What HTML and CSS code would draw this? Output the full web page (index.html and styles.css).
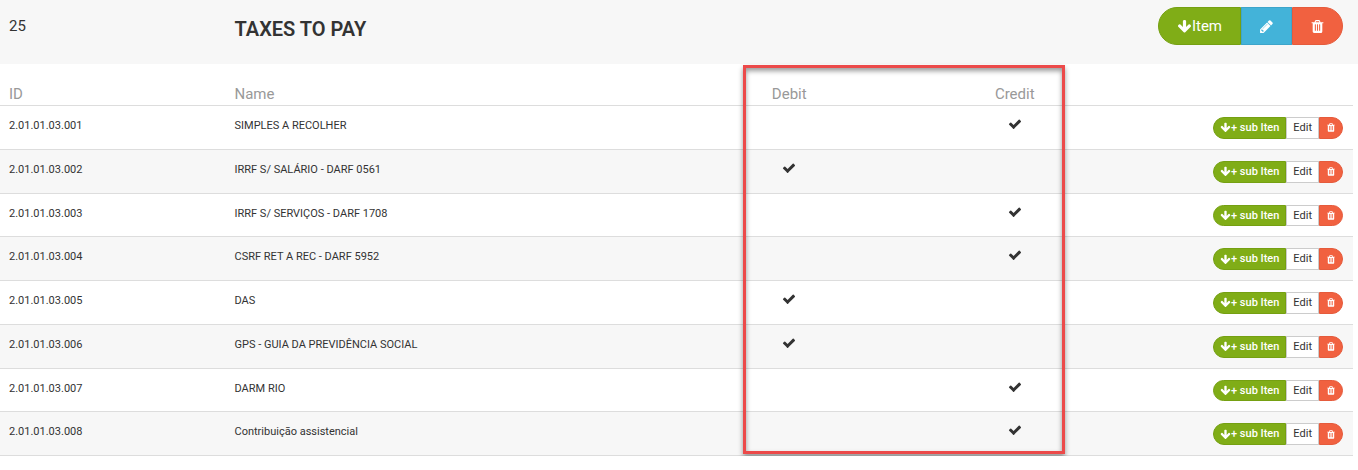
FILE: index.html
```
<!DOCTYPE html>
<html lang="en">
<head>
  <meta charset="UTF-8">
  <title>Taxes to pay</title>
  <link rel="stylesheet" href="styles.css">
</head>
<body>

  <!-- Icon set -->
  <svg class="icon-set" aria-hidden="true">
    <symbol id="check" viewBox="0 0 1792 1792"><path d="M1671 566q0 40-28 68l-724 724-136 136q-28 28-68 28t-68-28l-136-136-362-362q-28-28-28-68t28-68l136-136q28-28 68-28t68 28l294 295 656-657q28-28 68-28t68 28l136 136q28 28 28 68z"/></symbol>
    <symbol id="trash" viewBox="0 0 1792 1792"><path d="M704 1376v-704q0-14-9-23t-23-9h-64q-14 0-23 9t-9 23v704q0 14 9 23t23 9h64q14 0 23-9t9-23zm256 0v-704q0-14-9-23t-23-9h-64q-14 0-23 9t-9 23v704q0 14 9 23t23 9h64q14 0 23-9t9-23zm256 0v-704q0-14-9-23t-23-9h-64q-14 0-23 9t-9 23v704q0 14 9 23t23 9h64q14 0 23-9t9-23zm-544-992h448l-48-117q-7-9-17-11h-317q-10 2-17 11zm928 32v64q0 14-9 23t-23 9h-96v948q0 83-47 143.500t-113 60.500h-832q-66 0-113-58.500t-47-141.500v-952h-96q-14 0-23-9t-9-23v-64q0-14 9-23t23-9h309l70-167q15-37 54-63t79-26h320q40 0 79 26t54 63l70 167h309q14 0 23 9t9 23z"/></symbol>
    <symbol id="pencil" viewBox="0 0 1792 1792"><path d="M491 1536l91-91-235-235-91 91v107h128v128h107zm523-928q0-22-22-22-10 0-17 7l-542 542q-7 7-7 17 0 22 22 22 10 0 17-7l542-542q7-7 7-17zm-54-192l416 416-832 832h-416v-416zm683 96q0 53-37 90l-166 166-416-416 166-165q36-38 90-38 53 0 91 38l235 234q37 39 37 91z"/></symbol>
    <symbol id="arrow-down" viewBox="0 0 1792 1792"><path d="M1675 832q0 53-37 90l-651 652q-39 37-91 37-53 0-90-37l-651-652q-38-36-38-90 0-53 38-91l74-75q39-37 91-37 53 0 90 37l294 294v-704q0-52 38-90t90-38h128q52 0 90 38t38 90v704l294-294q37-37 90-37 52 0 91 37l75 75q37 39 37 91z"/></symbol>
  </svg>

  <!-- Group header -->
  <header class="group-header">
    <span class="group-id">25</span>
    <h1 class="group-name">TAXES TO PAY</h1>
    <div class="btn-group">
      <button class="btn btn-add" type="button"><svg class="icon"><use href="#arrow-down"/></svg>Item</button>
      <button class="btn btn-info" type="button" aria-label="Edit"><svg class="icon"><use href="#pencil"/></svg></button>
      <button class="btn btn-delete" type="button" aria-label="Delete"><svg class="icon"><use href="#trash"/></svg></button>
    </div>
  </header>

  <!-- Accounts -->
  <main class="accounts">
    <table class="accounts-table">
      <colgroup>
        <col class="col-id"><col class="col-name"><col class="col-flag"><col class="col-flag"><col class="col-actions">
      </colgroup>
      <thead>
        <tr>
          <th>ID</th>
          <th>Name</th>
          <th class="flag">Debit</th>
          <th class="flag">Credit</th>
          <td></td>
        </tr>
      </thead>
      <tbody>
        <tr>
          <td>2.01.01.03.001</td>
          <td>SIMPLES A RECOLHER</td>
          <td class="flag"></td>
          <td class="flag"><svg class="icon"><use href="#check"/></svg></td>
          <td>
            <div class="btn-group btn-group-sm">
              <button class="btn btn-add" type="button"><svg class="icon"><use href="#arrow-down"/></svg>+ sub Iten</button>
              <button class="btn btn-edit" type="button">Edit</button>
              <button class="btn btn-delete" type="button" aria-label="Delete"><svg class="icon"><use href="#trash"/></svg></button>
            </div>
          </td>
        </tr>
        <tr>
          <td>2.01.01.03.002</td>
          <td>IRRF S/ SALÁRIO - DARF 0561</td>
          <td class="flag"><svg class="icon"><use href="#check"/></svg></td>
          <td class="flag"></td>
          <td>
            <div class="btn-group btn-group-sm">
              <button class="btn btn-add" type="button"><svg class="icon"><use href="#arrow-down"/></svg>+ sub Iten</button>
              <button class="btn btn-edit" type="button">Edit</button>
              <button class="btn btn-delete" type="button" aria-label="Delete"><svg class="icon"><use href="#trash"/></svg></button>
            </div>
          </td>
        </tr>
        <tr>
          <td>2.01.01.03.003</td>
          <td>IRRF S/ SERVIÇOS - DARF 1708</td>
          <td class="flag"></td>
          <td class="flag"><svg class="icon"><use href="#check"/></svg></td>
          <td>
            <div class="btn-group btn-group-sm">
              <button class="btn btn-add" type="button"><svg class="icon"><use href="#arrow-down"/></svg>+ sub Iten</button>
              <button class="btn btn-edit" type="button">Edit</button>
              <button class="btn btn-delete" type="button" aria-label="Delete"><svg class="icon"><use href="#trash"/></svg></button>
            </div>
          </td>
        </tr>
        <tr>
          <td>2.01.01.03.004</td>
          <td>CSRF RET A REC - DARF 5952</td>
          <td class="flag"></td>
          <td class="flag"><svg class="icon"><use href="#check"/></svg></td>
          <td>
            <div class="btn-group btn-group-sm">
              <button class="btn btn-add" type="button"><svg class="icon"><use href="#arrow-down"/></svg>+ sub Iten</button>
              <button class="btn btn-edit" type="button">Edit</button>
              <button class="btn btn-delete" type="button" aria-label="Delete"><svg class="icon"><use href="#trash"/></svg></button>
            </div>
          </td>
        </tr>
        <tr>
          <td>2.01.01.03.005</td>
          <td>DAS</td>
          <td class="flag"><svg class="icon"><use href="#check"/></svg></td>
          <td class="flag"></td>
          <td>
            <div class="btn-group btn-group-sm">
              <button class="btn btn-add" type="button"><svg class="icon"><use href="#arrow-down"/></svg>+ sub Iten</button>
              <button class="btn btn-edit" type="button">Edit</button>
              <button class="btn btn-delete" type="button" aria-label="Delete"><svg class="icon"><use href="#trash"/></svg></button>
            </div>
          </td>
        </tr>
        <tr>
          <td>2.01.01.03.006</td>
          <td>GPS - GUIA DA PREVIDÊNCIA SOCIAL</td>
          <td class="flag"><svg class="icon"><use href="#check"/></svg></td>
          <td class="flag"></td>
          <td>
            <div class="btn-group btn-group-sm">
              <button class="btn btn-add" type="button"><svg class="icon"><use href="#arrow-down"/></svg>+ sub Iten</button>
              <button class="btn btn-edit" type="button">Edit</button>
              <button class="btn btn-delete" type="button" aria-label="Delete"><svg class="icon"><use href="#trash"/></svg></button>
            </div>
          </td>
        </tr>
        <tr>
          <td>2.01.01.03.007</td>
          <td>DARM RIO</td>
          <td class="flag"></td>
          <td class="flag"><svg class="icon"><use href="#check"/></svg></td>
          <td>
            <div class="btn-group btn-group-sm">
              <button class="btn btn-add" type="button"><svg class="icon"><use href="#arrow-down"/></svg>+ sub Iten</button>
              <button class="btn btn-edit" type="button">Edit</button>
              <button class="btn btn-delete" type="button" aria-label="Delete"><svg class="icon"><use href="#trash"/></svg></button>
            </div>
          </td>
        </tr>
        <tr>
          <td>2.01.01.03.008</td>
          <td>Contribuição assistencial</td>
          <td class="flag"></td>
          <td class="flag"><svg class="icon"><use href="#check"/></svg></td>
          <td>
            <div class="btn-group btn-group-sm">
              <button class="btn btn-add" type="button"><svg class="icon"><use href="#arrow-down"/></svg>+ sub Iten</button>
              <button class="btn btn-edit" type="button">Edit</button>
              <button class="btn btn-delete" type="button" aria-label="Delete"><svg class="icon"><use href="#trash"/></svg></button>
            </div>
          </td>
        </tr>
      </tbody>
    </table>

    <!-- Frame over the debit and credit columns -->
    <div class="highlight"></div>
  </main>

</body>
</html>
```
FILE: styles.css
```
/* RESET & BASE */
* {
  margin: 0;
  padding: 0;
  box-sizing: border-box;
}
body {
  background: #fff;
  color: #333;
  font-family: Roboto, sans-serif;
  font-size: 11px;
  line-height: 18px;
}
.icon-set {
  display: none;
}
.icon {
  width: 14px;
  height: 14px;
  fill: currentColor;
}

/* GROUP HEADER */
.group-header {
  display: grid;
  grid-template-columns: 1fr 3fr 2fr;
  align-items: start;
  margin-right: 5px;
  padding: 7px 0 13px;
  background: #f7f7f7;
  box-shadow: 5px 0 #f7f7f7;
}
.group-id {
  padding: 8px 9px;
  font-size: 15px;
  line-height: 22px;
}
.group-name {
  padding: 8px 9px;
  font-size: 20px;
  font-weight: 600;
  line-height: 28px;
}
.group-header .btn-group {
  margin-right: 10px;
}

/* BUTTONS */
.btn-group {
  display: flex;
  justify-content: flex-end;
}
.btn {
  display: flex;
  align-items: center;
  justify-content: center;
  padding: 8px 17px;
  border: 1px solid;
  color: #fff;
  font: 15px/20px Roboto, sans-serif;
  cursor: pointer;
}
.btn .icon {
  width: 15px;
  height: 15px;
}
.btn:first-child {
  border-radius: 20px 0 0 20px;
}
.btn:last-child {
  border-radius: 0 20px 20px 0;
}
.btn-add {
  padding: 8px 18px;
  background: #80ad17;
  border-color: #75a012;
}
.btn-info {
  background: #43b3d9;
  border-color: #3da5ca;
}
.btn-delete {
  background: #f16140;
  border-color: #e55b3c;
}
.btn-edit {
  background: #fff;
  border-color: #ccc;
  color: #333;
}
.group-header .btn {
  min-height: 38px;
}
.btn-group-sm .btn {
  padding: 3px 6px;
  font-size: 11px;
  line-height: 1.25;
}
.btn-group-sm .btn-add {
  font-weight: 500;
}
.btn-group-sm .icon {
  width: 11px;
  height: 11px;
}
.btn-group-sm .btn-delete .icon {
  width: 10px;
}

/* ACCOUNTS TABLE */
.accounts {
  position: relative;
  margin-right: 5px;
}
.accounts-table {
  width: 100%;
  table-layout: fixed;
  border-spacing: 0;
}
.col-id,
.col-flag,
.col-actions {
  width: 16.6667%;
}
.accounts-table th {
  padding: 19px 9px 0;
  color: #999;
  font-size: 15px;
  font-weight: 400;
  line-height: 22px;
  text-align: left;
}
.accounts-table tbody td {
  padding: 11px 9px 10px;
  border-top: 1px solid #ddd;
  vertical-align: top;
}
.accounts-table tbody td:last-child {
  padding-right: 10px;
}
.accounts-table tbody tr:nth-child(even) {
  background: #f7f7f7;
}
.accounts-table tbody tr:last-child td {
  border-bottom: 1px solid #ddd;
}
.accounts-table .flag {
  text-align: center;
}

/* HIGHLIGHT FRAME */
.highlight {
  position: absolute;
  top: 1px;
  right: calc(100% / 6 + 63px);
  bottom: 2px;
  left: calc(50% + 66px);
  border: 3px solid #ec4a4a;
  box-shadow: 0 3px 5px rgba(0,0,0,0.4), inset 0 3px 5px rgba(0,0,0,0.4);
  pointer-events: none;
}
```
